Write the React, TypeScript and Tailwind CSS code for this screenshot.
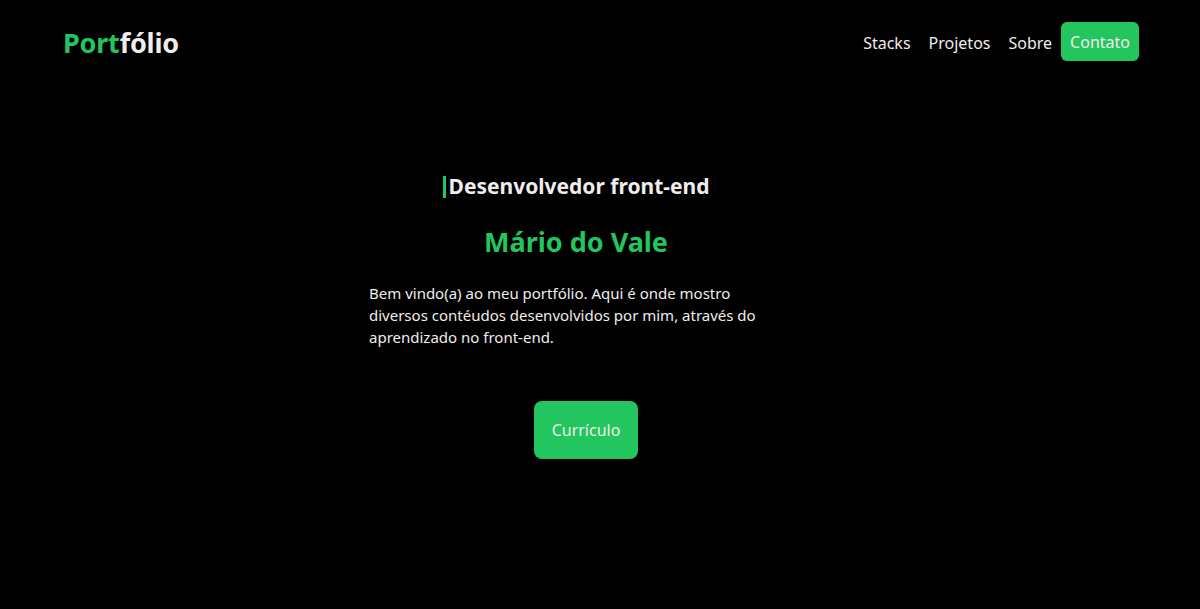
export default function App() {
  const links = ['Stacks', 'Projetos', 'Sobre'];

  return (
    <div className="min-h-screen w-full bg-black text-[#f0ecec] font-['Noto_Sans','Open_Sans',sans-serif]">
      {/* Header */}
      <header className="flex items-center justify-between pl-[63px] pr-[61px] pt-[22px]">
        <h1 className="text-[27px] font-bold leading-[41px] tracking-[-0.2px]">
          <span className="text-[#22c55e]">Port</span>
          <span>fólio</span>
        </h1>
        <nav className="flex items-start self-start">
          {links.map((link) => (
            <a key={link} href="#" className="px-[9px] pt-[2px] text-[16px] leading-[39px]">
              {link}
            </a>
          ))}
          <a href="#" className="rounded-md bg-[#22c55e] px-[9px] pb-2 pt-[10px] text-[16px] leading-[21px]">
            Contato
          </a>
        </nav>
      </header>

      {/* Hero */}
      <main className="flex flex-col items-center pr-[48px] pt-[109px]">
        <h2 className="flex items-center text-[21px] font-bold leading-[28px]">
          <span className="mr-[3px] mt-[2px] h-[22px] w-[3px] bg-[#22c55e]"></span>
          Desenvolvedor front-end
        </h2>
        <h3 className="mt-[24px] text-[27px] font-bold leading-[36px] text-[#22c55e]">
          Mário do Vale
        </h3>
        <p className="mt-[22px] w-[414px] text-[15px] leading-[22px]">
          Bem vindo(a) ao meu portfólio. Aqui é onde mostro diversos contéudos desenvolvidos por mim,
          através do aprendizado no front-end.
        </p>
        <button className="ml-[20px] mt-[53px] rounded-lg bg-[#22c55e] px-[18px] py-[18px] text-[16px] leading-[22px]">
          Currículo
        </button>
      </main>
    </div>
  );
}
